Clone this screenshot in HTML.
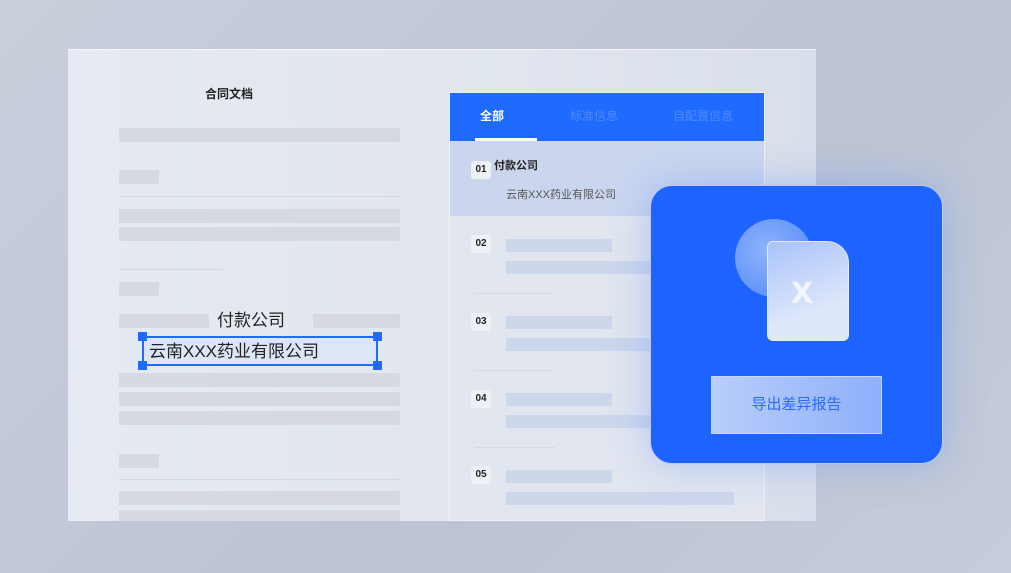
<!DOCTYPE html><html><head><meta charset="utf-8"><style>
*{margin:0;padding:0;box-sizing:border-box}
body{width:1011px;height:573px;overflow:hidden;background:linear-gradient(135deg,#c9cedb,#bcc4d4 60%,#c6ccd9);font-family:"Liberation Sans","Noto Sans CJK SC",sans-serif;position:relative}
.a{position:absolute}
.doc{left:68px;top:49px;width:748px;height:472px;background:linear-gradient(90deg,#e6ebf3,#e0e5ee 60%,#d9dfea);border-top:1px solid #f2f4f8}
.bar{position:absolute;background:#d5d9e2;height:14px}
.hl{position:absolute;height:1px;background:#d3d8e1}
.list{left:449px;top:92px;width:316px;height:429px;background:#e1e6ef;border:1px solid #eef1f7}
.tabs{left:0;top:0;width:100%;height:48px;background:#1f6bff}
.num{position:absolute;left:21px;width:20px;height:18px;background:#eef1f6;border-radius:3px;font-size:10px;font-weight:bold;color:#222;text-align:center;line-height:18px}
.pb{position:absolute;background:#cdd7ec;height:13px;left:56px}
.card{left:650px;top:185px;width:293px;height:279px;background:#1c63ff;border-radius:22px;border:1px solid #b6cbf5;box-shadow:0 0 40px rgba(80,130,255,.35)}
.h{position:absolute;width:9px;height:9px;background:#1f6bff}
</style></head><body>
<div class="a doc">
 <div class="a" style="left:137px;top:35px;font-size:12px;font-weight:bold;color:#222">合同文档</div>
 <div class="bar" style="left:51px;top:78px;width:281px"></div>
 <div class="bar" style="left:51px;top:120px;width:40px"></div>
 <div class="hl" style="left:51px;top:146px;width:281px"></div>
 <div class="bar" style="left:51px;top:159px;width:281px"></div>
 <div class="bar" style="left:51px;top:177px;width:281px"></div>
 <div class="hl" style="left:51px;top:219px;width:106px"></div>
 <div class="bar" style="left:51px;top:232px;width:40px"></div>
 <div class="bar" style="left:51px;top:264px;width:90px"></div>
 <div class="bar" style="left:245px;top:264px;width:87px"></div>
 <div class="a" style="left:149px;top:256px;font-size:17px;color:#222">付款公司</div>
 <div class="a" style="left:74px;top:286px;width:236px;height:30px;border:2px solid #1f6bff;background:#dde6f6"></div>
 <div class="h" style="left:70px;top:282px"></div><div class="h" style="left:305px;top:282px"></div>
 <div class="h" style="left:70px;top:311px"></div><div class="h" style="left:305px;top:311px"></div>
 <div class="a" style="left:81px;top:287px;font-size:17px;color:#222">云南XXX药业有限公司</div>
 <div class="bar" style="left:51px;top:323px;width:281px"></div>
 <div class="bar" style="left:51px;top:342px;width:281px"></div>
 <div class="bar" style="left:51px;top:361px;width:281px"></div>
 <div class="bar" style="left:51px;top:404px;width:40px"></div>
 <div class="hl" style="left:51px;top:429px;width:281px"></div>
 <div class="bar" style="left:51px;top:441px;width:281px"></div>
 <div class="bar" style="left:51px;top:460px;width:281px;height:11px"></div>
</div>
<div class="a list">
 <div class="a tabs">
  <div class="a" style="left:30px;top:14px;color:#fff;font-size:12px;font-weight:bold">全部</div>
  <div class="a" style="left:25px;top:45px;width:62px;height:3px;background:#fff"></div>
  <div class="a" style="left:120px;top:14px;color:#4d89ff;font-size:12px">标准信息</div>
  <div class="a" style="left:223px;top:14px;color:#4d89ff;font-size:12px">自配置信息</div>
 </div>
 <div class="a" style="left:0;top:48px;width:100%;height:75px;background:#cbd6ee"></div>
 <div class="num" style="top:68px">01</div>
 <div class="a" style="left:44px;top:64px;font-size:11px;font-weight:bold;color:#222">付款公司</div>
 <div class="a" style="left:56px;top:93px;font-size:11px;color:#555">云南XXX药业有限公司</div>
 <div class="num" style="top:142px">02</div><div class="pb" style="top:146px;width:106px"></div><div class="pb" style="top:168px;width:200px"></div>
 <div class="hl" style="left:25px;top:200px;width:80px"></div>
 <div class="num" style="top:220px">03</div><div class="pb" style="top:223px;width:106px"></div><div class="pb" style="top:245px;width:200px"></div>
 <div class="hl" style="left:25px;top:277px;width:80px"></div>
 <div class="num" style="top:297px">04</div><div class="pb" style="top:300px;width:106px"></div><div class="pb" style="top:322px;width:200px"></div>
 <div class="hl" style="left:25px;top:354px;width:80px"></div>
 <div class="num" style="top:373px">05</div><div class="pb" style="top:377px;width:106px"></div><div class="pb" style="top:399px;width:228px"></div>
</div>
<div class="a card">
 <div class="a" style="left:84px;top:33px;width:78px;height:78px;border-radius:50%;background:radial-gradient(circle at 40% 40%,#8fb3fb,#4d86fb)"></div>
 <div class="a" style="left:116px;top:55px;width:82px;height:100px;border-radius:6px 22px 6px 6px;background:linear-gradient(160deg,#a9c3fa,#dfe8fb 70%);border:1px solid #e3ebfd"></div>
 <div class="a" style="left:140px;top:82px;font-size:40px;font-weight:bold;color:#f3f6fd">x</div>
 <div class="a" style="left:60px;top:190px;width:171px;height:58px;background:linear-gradient(90deg,#b9cefa,#8eb0fa);border:1px solid #c9d9fb;color:#2a6cf5;font-size:15px;text-align:center;line-height:56px">导出差异报告</div>
</div>
</body></html>
